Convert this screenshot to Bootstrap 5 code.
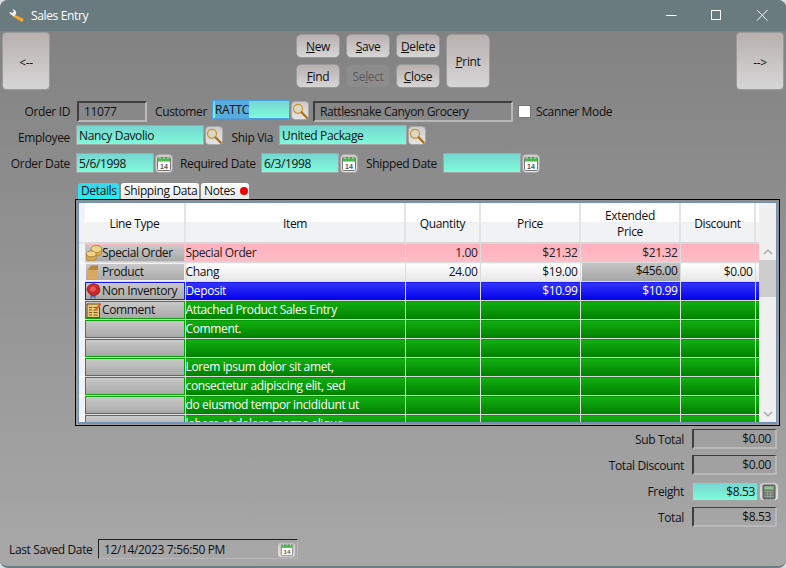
<!DOCTYPE html>
<html lang="en">
<head>
<meta charset="UTF-8">
<meta name="viewport" content="width=device-width, initial-scale=1.0">
<title>Sales Entry</title>
<link href="https://cdn.jsdelivr.net/npm/bootstrap@5.3.0/dist/css/bootstrap.min.css" rel="stylesheet">
<style>
    html, body { height: 100%; }
    body {
        margin: 0;
        background: #d9dcdc;
        font-family: "Open Sans", "Noto Sans", sans-serif;
        font-size: 12px;
        letter-spacing: -0.36px;
        color: #111;
        overflow: hidden;
    }
    .app-window {
        width: 786px;
        height: 568px;
        display: flex;
        flex-direction: column;
        border-radius: 8px;
        overflow: hidden;
        background: linear-gradient(#808080, #a8a8a8);
        border-bottom: 2px solid #6d7d82;
    }
    .title-bar {
        height: 31px;
        flex: none;
        background: #6a7b80;
        color: #fff;
        padding-left: 9px;
    }
    .title-bar span { margin-left: 6px; }
    .win-ctl { margin-left: auto; display: block; }

    /* toolbar */
    .tool-row { padding: 1px 2px 0; height: 60px; }
    .nav-btn, .cmd-btn {
        background: linear-gradient(#b9b0b0, #d6d6d6);
        border: 1px solid #9a9a9a;
        color: #111;
        font-size: 12px;
        padding: 2px 0 0;
        letter-spacing: inherit;
    }
    .nav-btn { width: 48px; height: 58px; border-radius: 4px; padding-top: 4px; }
    .cmd-grid {
        display: grid;
        grid-template-columns: 44px 44px 44px 44px;
        grid-template-rows: 24px 24px;
        gap: 6px;
        margin-top: 2px;
    }
    .cmd-btn { border-radius: 5px; }
    .cmd-btn:hover { background: #ccc; color: #111; }
    .cmd-print { grid-row: 1 / 3; grid-column: 4; }
    .cmd-off, .cmd-off:disabled { background: #8c8c8c; color: #5c5c5c; border-color: #868686; opacity: 1; }

    /* header fields */
    .form-rows { padding-top: 9px; }
    .field-row { display: flex; align-items: flex-start; }
    .row-a { height: 25px; }
    .row-b { height: 28px; }
    .row-c { height: 30px; }
    .lbl { text-align: right; flex: none; margin-right: 6px; white-space: nowrap; line-height: 24px; }
    .row-b .lbl { line-height: 26px; }
    .row-c .lbl { line-height: 22px; }
    .lbl-first { width: 70px; }
    .lbl-cust { width: 51px; margin-left: 8px; }
    .lbl-ship { width: 43px; margin-left: 7px; }
    .lbl-req { width: 75px; margin-left: 7px; }
    .lbl-shipped { width: 72px; margin-left: 7px; }
    .inp {
        height: 20px;
        line-height: 19px;
        padding-left: 2px;
        flex: none;
        background: linear-gradient(#76d6d0, #80fadb);
        border: 1px solid #a5a5a5;
        color: #111;
        white-space: nowrap;
        overflow: hidden;
    }
    .inp-sel { border-color: #4b9fe0; width: 78px; height: 19px; line-height: 18px; }
    .inp-sel b { font-weight: 400; background: #57aede; }
    .w-emp { width: 128px; }
    .w-via { width: 128px; }
    .w-date { width: 78px; }
    .ro-box {
        height: 21px;
        line-height: 17px;
        padding-left: 5px;
        margin-top: 1px;
        flex: none;
        border-style: solid;
        border-width: 2px;
        border-color: #3e3e3e #b8b8b8 #b8b8b8 #3e3e3e;
        white-space: nowrap;
        overflow: hidden;
    }
    .ro-id { width: 70px; margin-left: 1px; }
    .ro-name { width: 200px; margin-left: 4px; }
    .pick-btn {
        width: 18px;
        height: 19px;
        margin: 1px 0 0 1px;
        flex: none;
        border: 1px solid #a8a8a8;
        border-radius: 4px;
        background: linear-gradient(#cfcaca, #e4e4e4);
        display: flex;
        align-items: center;
        justify-content: center;
        padding: 0;
    }
    .scan-box {
        width: 13px;
        height: 13px;
        margin: 5px 5px 0 5px;
        background: #fff;
        border: 1px solid #777;
        flex: none;
    }

    /* tabs and grid */
    .tab-strip { margin-left: 78px; height: 16px; display: flex; gap: 2px; }
    .tab-item {
        height: 16px;
        line-height: 16px;
        padding: 0 0 0 3px;
        background: linear-gradient(#fff, #e8e8e8);
        border-radius: 3px 3px 0 0;
        white-space: nowrap;
    }
    .tab-details { width: 41px; }
    .tab-ship { width: 78px; }
    .tab-notes { width: 48px; }
    .tab-on { background: linear-gradient(#39d5ee, #25eef5); }
    .tab-dot {
        display: inline-block;
        width: 8px;
        height: 8px;
        border-radius: 50%;
        background: #ee0000;
        margin-left: 5px;
    }
    .grid-frame {
        margin-left: 75px;
        width: 705px;
        height: 227px;
        border: 1px solid #000;
        padding: 2px 2px 1px;
        flex: none;
    }
    .grid-inner {
        height: 100%;
        display: flex;
        background: #fff;
        border: 1px solid #7393b5;
        border-width: 1px 1px 2px 1px;
        overflow: hidden;
    }
    .grid-scroll { flex: 1; overflow: hidden; }
    .data-tbl {
        table-layout: fixed;
        width: 680px;
        margin: 0;
        border-collapse: collapse;
        --bs-table-bg: transparent;
        color: inherit;
    }
    .c-sel { width: 6px; }
    .c-type { width: 100px; }
    .c-item { width: 220px; }
    .c-qty { width: 75px; }
    .c-price { width: 100px; }
    .c-disc { width: 75px; }
    .c-end { width: 4px; }
    .data-tbl th, .data-tbl td {
        padding: 0 2px;
        height: 19px;
        line-height: 17px;
        font-weight: 400;
        border: 0;
        border-right: 1px solid #dcdcdc;
        border-bottom: 1px solid #dcdcdc;
        white-space: nowrap;
        overflow: hidden;
        box-shadow: none;
        background: transparent;
        color: inherit;
    }
    .data-tbl td.item-cell { padding-left: 0; }
    .data-tbl thead th {
        height: 40px;
        padding-top: 2px;
        text-align: center;
        vertical-align: middle;
        white-space: normal;
        line-height: 16px;
        background: linear-gradient(#fff 50%, #f1f2f4 50%);
        border-right: 2px solid #e4e4e4;
        border-bottom: 2px solid #d8d8d8;
        color: #111;
    }
    .data-tbl .sel-col { padding: 0; border-right: 0; border-bottom: 2px solid #fff; }
    .data-tbl thead th.sel-col { background: #f2f2f2; border-bottom: 2px solid #e4e4e4; }
    .data-tbl .end-col { padding: 0; border-right: 0; }
    .row-pink td { background: linear-gradient(#ffb0bc, #ffbdc8); color: #222; }
    .row-white td { background: linear-gradient(#fff, #e6e6e6); color: #111; }
    .row-blue td { background: linear-gradient(#3535ff, #0000e8); color: #fff; }
    .row-green td { background: linear-gradient(#12b012, #007f00); color: #fff; }
    .data-tbl tr td.sel-col { background: #f2f2f2; }
    .num { text-align: right; }
    .data-tbl td.type-cell { padding: 0; }
    .type-box {
        height: 18px;
        display: flex;
        align-items: center;
        background: linear-gradient(#c9c9c9, #a9a9a9);
        color: #111;
        line-height: 16px;
        border: 1px solid transparent;
    }
    .type-box svg { flex: none; margin-top: -1px; }
    .row-pink .type-box { border-color: #f9b9c4; }
    .row-white .type-box { border-color: #f2f2f2; }
    .row-blue .type-box { border-color: #1a1ae8; }
    .row-green .type-box { border-color: #0ca30c; }
    .data-tbl td.calc-cell { padding: 0; }
    .calc-box {
        height: 18px;
        line-height: 16px;
        padding-right: 2px;
        margin-left: 1px;
        background: linear-gradient(#c4c4c4, #a6a6a6);
        text-align: right;
    }
    .v-bar {
        width: 17px;
        flex: none;
        background: #f0f0f0;
        display: flex;
        flex-direction: column;
    }
    .v-bar-top { height: 40px; }
    .v-bar-arrow { height: 17px; display: flex; align-items: center; justify-content: center; }
    .v-bar-thumb { height: 37px; background: #cdcdcd; }
    .v-bar-fill { flex: 1; }

    /* totals */
    .sum-area { padding-top: 3px; }
    .sum-row { height: 26px; display: flex; justify-content: flex-end; padding-right: 9px; }
    .sum-row .lbl { margin-right: 8px; line-height: 22px; }
    .sum-val {
        width: 85px;
        height: 20px;
        margin: 0;
        line-height: 18px;
        text-align: right;
        padding: 0 4px 0 0;
        border-width: 1px 2px 2px 2px;
    }
    .sum-inp { width: 66px; height: 19px; margin-top: 1px; line-height: 17px; text-align: right; padding-right: 2px; }
    .sum-pick { margin-right: -2px; width: 20px; }
    .bottom-row { margin-top: auto; padding: 0 0 5px 9px; display: flex; }
    .bottom-row .lbl { width: 83px; line-height: 22px; margin: 0; }
    .stamp-box {
        width: 200px;
        height: 20px;
        line-height: 18px;
        padding: 1px 1px 0 5px;
        margin-left: 6px;
        border-style: solid;
        border-width: 1px;
        border-color: #222 #b8b8b8 #b8b8b8 #222;
        display: flex;
        justify-content: space-between;
        align-items: center;
    }
    .stamp-box .pick-btn { height: 16px; width: 19px; margin: 0; }
</style>
</head>
<body>
<svg width="0" height="0" class="position-absolute">
    <defs>
        <symbol id="ico-lens" viewBox="0 0 16 16">
            <circle cx="6" cy="5.800" r="4.500" fill="#dcd8c6" stroke="#c9962e" stroke-width="1.200"/>
            <path d="M9.500 9.300 14.600 14.600" stroke="#a86f18" stroke-width="2.200" stroke-linecap="round"/>
        </symbol>
        <symbol id="ico-cal" viewBox="0 0 16 16">
            <rect x="1.500" y="1.500" width="13" height="13" rx="1" fill="#fff" stroke="#777"/>
            <rect x="2" y="2" width="12" height="3.500" fill="#49b54a"/>
            <path d="M4 1v2M8 1v2M12 1v2" stroke="#ddd"/>
            <text x="8" y="13" font-size="7" font-weight="700" text-anchor="middle" fill="#555" font-family="Liberation Sans, sans-serif" letter-spacing="0">14</text>
        </symbol>
        <symbol id="ico-calc" viewBox="0 0 16 16">
            <rect x="2" y="1" width="12" height="14" rx="1" fill="#6e7a6e" stroke="#555"/>
            <rect x="3.500" y="2.500" width="9" height="3" fill="#8fc88f"/>
            <path d="M3.500 7.500h9M3.500 10h9M3.500 12.500h9M6.500 7v6.500M9.500 7v6.500" stroke="#9aa09a" stroke-width=".9"/>
        </symbol>
        <symbol id="ico-coins" viewBox="0 0 16 16">
            <ellipse cx="10.300" cy="4" rx="5.200" ry="3.500" fill="#e3bd66" stroke="#a97e2c" stroke-width=".7"/>
            <path d="M5.100 4v3.500c0 2 2.300 3.500 5.200 3.500s5.200-1.500 5.200-3.500V4" fill="#d8ab52" stroke="#a97e2c" stroke-width=".7"/>
            <ellipse cx="10.300" cy="4" rx="5.200" ry="3.500" fill="#f0d488" stroke="#a97e2c" stroke-width=".7"/>
            <ellipse cx="5.300" cy="9" rx="5" ry="3" fill="#f0d488" stroke="#a97e2c" stroke-width=".7"/>
            <path d="M.3 9v4c0 1.700 2.200 3 5 3s5-1.300 5-3V9c0 1.700-2.200 3-5 3s-5-1.300-5-3z" fill="#d8ab52" stroke="#a97e2c" stroke-width=".7"/>
        </symbol>
        <symbol id="ico-box" viewBox="0 0 16 16">
            <path d="M1 6 5 1.500h7V15H1z" fill="#c99a50"/>
            <path d="M1 6h11v9H1z" fill="#d9a95f"/>
            <path d="M5 1.500h7V6H2.500z" fill="#b98840"/>
        </symbol>
        <symbol id="ico-seal" viewBox="0 0 16 16">
            <path d="M5 10 4 15.800l3-1.500 3 1.500L9 10z" fill="#5a6fc0"/>
            <path d="M7.500.5 10 1.500l2.500.8.800 2.500.7 2.200-.7 2.500-1.500 1.800-2.300 1-2 .3-2.400-.7-2-1.500L1.300 8 1 6l.8-2.300L3.500 2z" fill="#c8282a" stroke="#8a1416" stroke-width=".7"/>
            <circle cx="7" cy="6" r="2.800" fill="#e25a54"/>
        </symbol>
        <symbol id="ico-note" viewBox="0 0 16 16">
            <rect x="1" y="2" width="12.500" height="13.500" fill="#e8c877" stroke="#6b4a1c"/>
            <path d="M3 5.500h3M3 8h3M3 10.500h3M3 13h3M7.500 5.500h4M7.500 8h4M7.500 10.500h4M7.500 13h4" stroke="#7b5a22"/>
            <path d="M9 7 14 1l1.500 1.200-5 6z" fill="#e2603a"/>
        </symbol>
    </defs>
</svg>

<div class="app-window">
    <div class="title-bar d-flex align-items-center">
        <svg width="16" height="16" viewBox="0 0 16 16">
            <path d="M5 6.500 14 10.500a1.900 1.900 0 0 1-1.800 3.200L3.600 8.300z" fill="#f0a92c"/>
            <path d="M.5 3.500 3 5 5 3.500 3 1.500a3.400 3.400 0 0 1 4 4.400L5 8.500 2.500 7A3.400 3.400 0 0 1 .5 3.500z" fill="#eee"/>
        </svg>
        <span>Sales Entry</span>
        <svg class="win-ctl" width="120" height="31" viewBox="0 0 120 31" fill="none" stroke="#fff" stroke-width="1">
            <path d="M0 15.500h10.500"/>
            <rect x="45.500" y="10.500" width="9" height="9"/>
            <path d="M91 10l10.500 10.500M101.500 10 91 20.500"/>
        </svg>
    </div>

    <div class="tool-row d-flex justify-content-between align-items-start">
        <button class="btn nav-btn">&lt;--</button>
        <div class="cmd-grid">
            <button class="btn cmd-btn"><u>N</u>ew</button>
            <button class="btn cmd-btn"><u>S</u>ave</button>
            <button class="btn cmd-btn"><u>D</u>elete</button>
            <button class="btn cmd-btn cmd-print"><u>P</u>rint</button>
            <button class="btn cmd-btn"><u>F</u>ind</button>
            <button class="btn cmd-btn cmd-off" disabled>Se<u>l</u>ect</button>
            <button class="btn cmd-btn"><u>C</u>lose</button>
        </div>
        <button class="btn nav-btn">--&gt;</button>
    </div>

    <div class="form-rows">
        <div class="field-row row-a">
            <div class="lbl lbl-first">Order ID</div>
            <div class="ro-box ro-id">11077</div>
            <div class="lbl lbl-cust">Customer</div>
            <div class="inp inp-sel"><b>RATTC</b></div>
            <button class="pick-btn"><svg width="16" height="16"><use href="#ico-lens"/></svg></button>
            <div class="ro-box ro-name">Rattlesnake Canyon Grocery</div>
            <div class="scan-box"></div>
            <div class="lbl">Scanner Mode</div>
        </div>
        <div class="field-row row-b">
            <div class="lbl lbl-first">Employee</div>
            <div class="inp w-emp">Nancy Davolio</div>
            <button class="pick-btn"><svg width="16" height="16"><use href="#ico-lens"/></svg></button>
            <div class="lbl lbl-ship">Ship Via</div>
            <div class="inp w-via">United Package</div>
            <button class="pick-btn"><svg width="16" height="16"><use href="#ico-lens"/></svg></button>
        </div>
        <div class="field-row row-c">
            <div class="lbl lbl-first">Order Date</div>
            <div class="inp w-date">5/6/1998</div>
            <button class="pick-btn"><svg width="16" height="16"><use href="#ico-cal"/></svg></button>
            <div class="lbl lbl-req">Required Date</div>
            <div class="inp w-date">6/3/1998</div>
            <button class="pick-btn"><svg width="16" height="16"><use href="#ico-cal"/></svg></button>
            <div class="lbl lbl-shipped">Shipped Date</div>
            <div class="inp w-date"></div>
            <button class="pick-btn"><svg width="16" height="16"><use href="#ico-cal"/></svg></button>
        </div>
    </div>

    <div class="tab-strip">
        <div class="tab-item tab-details tab-on">Details</div>
        <div class="tab-item tab-ship">Shipping Data</div>
        <div class="tab-item tab-notes">Notes<span class="tab-dot"></span></div>
    </div>
    <div class="grid-frame">
        <div class="grid-inner">
            <div class="grid-scroll">
                <table class="table data-tbl">
                    <colgroup>
                        <col class="c-sel"><col class="c-type"><col class="c-item"><col class="c-qty">
                        <col class="c-price"><col class="c-price"><col class="c-disc"><col class="c-end">
                    </colgroup>
                    <thead>
                        <tr><th class="sel-col"></th><th>Line Type</th><th>Item</th><th>Quantity</th><th>Price</th><th>Extended<br>Price</th><th>Discount</th><th class="end-col"></th></tr>
                    </thead>
                    <tbody id="gridBody"></tbody>
                </table>
            </div>
            <div class="v-bar">
                <div class="v-bar-top"></div>
                <div class="v-bar-arrow"><svg width="10" height="6" viewBox="0 0 10 6" fill="none" stroke="#a0a0a0" stroke-width="1.200"><path d="M1 5 5 1l4 4"/></svg></div>
                <div class="v-bar-thumb"></div>
                <div class="v-bar-fill"></div>
                <div class="v-bar-arrow"><svg width="10" height="6" viewBox="0 0 10 6" fill="none" stroke="#a0a0a0" stroke-width="1.200"><path d="M1 1l4 4 4-4"/></svg></div>
            </div>
        </div>
    </div>

    <div class="sum-area">
        <div class="sum-row"><div class="lbl">Sub Total</div><div class="ro-box sum-val">$0.00</div></div>
        <div class="sum-row"><div class="lbl">Total Discount</div><div class="ro-box sum-val">$0.00</div></div>
        <div class="sum-row"><div class="lbl">Freight</div><div class="inp sum-inp">$8.53</div><button class="pick-btn sum-pick"><svg width="16" height="16"><use href="#ico-calc"/></svg></button></div>
        <div class="sum-row"><div class="lbl">Total</div><div class="ro-box sum-val">$8.53</div></div>
    </div>

    <div class="bottom-row">
        <div class="lbl">Last Saved Date</div>
        <div class="stamp-box">12/14/2023 7:56:50 PM<span class="pick-btn"><svg width="14" height="14"><use href="#ico-cal"/></svg></span></div>
    </div>
</div>

<script>
    // rows of the order grid
    const rows = [
        { cls: 'row-pink', icon: 'ico-coins', type: 'Special Order', item: 'Special Order', qty: '1.00', price: '$21.32', ext: '$21.32', disc: '' },
        { cls: 'row-white', icon: 'ico-box', type: 'Product', item: 'Chang', qty: '24.00', price: '$19.00', ext: '$456.00', disc: '$0.00', calc: true },
        { cls: 'row-blue', icon: 'ico-seal', type: 'Non Inventory', item: 'Deposit', qty: '', price: '$10.99', ext: '$10.99', disc: '' },
        { cls: 'row-green', icon: 'ico-note', type: 'Comment', item: 'Attached Product Sales Entry' },
        { cls: 'row-green', item: 'Comment.' },
        { cls: 'row-green', item: '' },
        { cls: 'row-green', item: 'Lorem ipsum dolor sit amet,' },
        { cls: 'row-green', item: 'consectetur adipiscing elit, sed' },
        { cls: 'row-green', item: 'do eiusmod tempor incididunt ut' },
        { cls: 'row-green', item: 'labore et dolore magna aliqua.' }
    ];
    const gridBody = document.getElementById('gridBody');
    rows.forEach(r => {
        const tr = document.createElement('tr');
        tr.className = r.cls;
        const icon = r.icon ? `<svg width="16" height="16"><use href="#${r.icon}"/></svg>` : '';
        const ext = r.calc
            ? `<td class="calc-cell"><div class="calc-box">${r.ext}</div></td>`
            : `<td class="num">${r.ext || ''}</td>`;
        tr.innerHTML = `<td class="sel-col"></td>
            <td class="type-cell"><div class="type-box">${icon}${r.type || ''}</div></td>
            <td class="item-cell">${r.item}</td>
            <td class="num">${r.qty || ''}</td>
            <td class="num">${r.price || ''}</td>
            ${ext}
            <td class="num">${r.disc || ''}</td>
            <td class="end-col"></td>`;
        gridBody.appendChild(tr);
    });
</script>
<script src="https://cdn.jsdelivr.net/npm/bootstrap@5.3.0/dist/js/bootstrap.bundle.min.js"></script>
</body>
</html>
